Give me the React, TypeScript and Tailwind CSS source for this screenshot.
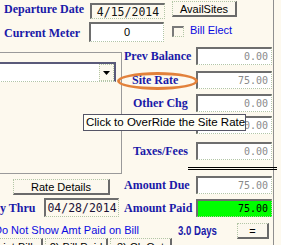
const label =
  "whitespace-nowrap font-['Liberation_Serif',serif] text-[12px] font-bold leading-[16px] text-[#1a1aa8]";
const field =
  "border-t-2 border-l-2 border-r border-b border-t-[#6e6e6e] border-l-[#6e6e6e] border-r-[#b3c6a6] border-b-[#b3c6a6] [border-right-style:dotted] [border-bottom-style:dotted]";
const button =
  "flex items-center justify-center whitespace-nowrap border-t border-l border-r-2 border-b-2 border-t-[#b3c6a6] border-l-[#b3c6a6] border-r-[#6a6a6a] border-b-[#6a6a6a] [border-top-style:dotted] [border-left-style:dotted] bg-[#fcf8ee] text-[11px] leading-[14px] text-black";
const mono = "font-['DejaVu_Sans_Mono',monospace]";

function Amount({ value, green }: { value: string; green?: boolean }) {
  return (
    <div
      className={`${field} flex h-[18px] w-[76px] items-center justify-end pr-[3px] ${mono} text-[10px] leading-[14px] ${
        green ? "bg-[#00ff00] text-black" : "bg-white text-[#8a8a8a]"
      }`}
    >
      {value}
    </div>
  );
}

function AmountRow({ name, pad, value, top, green }: { name: string; pad: string; value: string; top: string; green?: boolean }) {
  return (
    <div className={`flex h-[18px] items-center ${top}`}>
      <div className={`w-[74px] ${pad} ${label}`}>{name}</div>
      <Amount value={value} green={green} />
    </div>
  );
}

export default function App() {
  return (
    <div className="relative h-[245px] w-[281px] overflow-hidden bg-[#fdf9ee] font-['Liberation_Sans',Arial,sans-serif]">
      <div className="h-full w-[274px] border-r border-[#8f8f8f]">
        {/* departure date */}
        <div className="flex h-[20px] items-start">
          <div className={`w-[90px] pl-[4px] pt-[1px] ${label}`}>Departure Date</div>
          <div
            className={`${field} mt-[3px] flex h-[16px] w-[75px] items-center justify-center bg-[#fdf9ee] ${mono} text-[11.5px] leading-[12px] text-[#141414]`}
          >
            4/15/2014
          </div>
          <div className={`${button} ml-[7px] mt-[1px] h-[16px] w-[65px]`}>AvailSites</div>
        </div>

        {/* current meter */}
        <div className="flex h-[24px] items-start">
          <div className={`w-[89px] pl-[4px] pt-[5px] ${label}`}>Current Meter</div>
          <div className={`${field} mt-[2px] flex h-[20px] w-[75px] items-center justify-center bg-white text-[11px] text-black`}>
            0
          </div>
          <div className="ml-[8px] mt-[6px] h-[11px] w-[12px] border-t-2 border-l-2 border-r border-b border-t-[#7a7a7a] border-l-[#7a7a7a] border-r-[#b3c6a6] border-b-[#b3c6a6] [border-right-style:dotted] [border-bottom-style:dotted]" />
          <div className="ml-[6px] mt-[3px] whitespace-nowrap text-[11px] leading-[14px] text-[#0a0ae0]">Bill Elect</div>
        </div>

        {/* middle */}
        <div className="flex">
          <div className="w-[122px] shrink-0">
            <div className="mt-[8px] h-[122px] w-[122px] border-t border-r border-b border-[#9a9a9a] pt-[9px]">
              <div className="-ml-[3px] flex h-[20px] w-[119px] border-t-2 border-l-2 border-r-2 border-b border-t-[#5a5a7a] border-l-[#5a5a7a] border-r-[#5a5a7a] border-b-[#b3c6a6] [border-bottom-style:dotted] bg-white">
                <div className="flex-1" />
                <div className="flex w-[15px] items-center justify-center border border-dotted border-[#b3c6a6] bg-[#fdf9ee]">
                  <svg width="7" height="4" viewBox="0 0 7 4">
                    <polygon points="0,0 7,0 3.5,4" fill="#000" />
                  </svg>
                </div>
              </div>
            </div>
            <div className={`${button} ml-[13px] mt-[5px] h-[16px] w-[97px]`}>Rate Details</div>
            <div className="mt-[3px] flex h-[19px] items-center">
              <div className={`w-[44px] ${label}`}>y Thru</div>
              <div
                className={`${field} flex h-[19px] w-[75px] items-center justify-center bg-[#fdf9ee] ${mono} text-[11.5px] leading-[12px] text-[#1c1236]`}
              >
                04/28/2014
              </div>
            </div>
          </div>

          <div className="flex-1">
            <AmountRow name="Prev Balance" pad="pl-[2px]" value="0.00" top="mt-[3px]" />
            <AmountRow name="Site Rate" pad="pl-[10px]" value="75.00" top="mt-[6px]" />
            <AmountRow name="Other Chg" pad="pl-[11px]" value="0.00" top="mt-[5px]" />
            <AmountRow name="" pad="pl-[11px]" value="0.00" top="mt-[4px]" />
            <AmountRow name="Taxes/Fees" pad="pl-[11px]" value="0.00" top="mt-[8px]" />
            <div className="ml-[66px] mt-[7px] h-[3px] w-[89px] border-t border-b border-black" />
            <AmountRow name="Amount Due" pad="pl-[2px]" value="75.00" top="mt-[6px]" />
            <AmountRow name="Amount Paid" pad="pl-[2px]" value="75.00" top="mt-[5px]" green />
          </div>
        </div>

        {/* bottom */}
        <div className="flex h-[21px] items-start">
          <div className="w-[178px]">
            <div className="-ml-[6px] mt-[6px] whitespace-nowrap text-[11px] leading-[14px] text-[#0a0ae0]">
              Do Not Show Amt Paid on Bill
            </div>
          </div>
          <div className="w-[59px] pt-[7px]">
            <div className="origin-left scale-x-[0.8] whitespace-nowrap text-[12px] font-bold leading-[14px] text-[#1a1aa8]">
              3.0 Days
            </div>
          </div>
          <div className={`${button} mt-[6px] h-[16px] w-[32px]`}>=</div>
        </div>
        <div className="flex">
          <div className={`${button} -ml-[30px] h-[18px] w-[73px]`}>1) Print Bill</div>
          <div className={`${button} ml-[2px] h-[18px] w-[63px]`}>2) Bill Paid</div>
          <div className={`${button} ml-[2px] h-[18px] w-[62px]`}>3) Ck Out</div>
        </div>
      </div>

      {/* annotation + tooltip */}
      <div className="absolute left-[117px] top-[72px] h-[18px] w-[81px] rounded-[50%] border-[3px] border-[#e2813b]" />
      <div className="absolute left-[83px] top-[114px] h-[17px] w-[163px] whitespace-nowrap border border-[#555566] bg-[#fffff6] pl-[2px] text-[11.5px] leading-[15px] text-black">
        Click to OverRide the Site Rate
      </div>
    </div>
  );
}
